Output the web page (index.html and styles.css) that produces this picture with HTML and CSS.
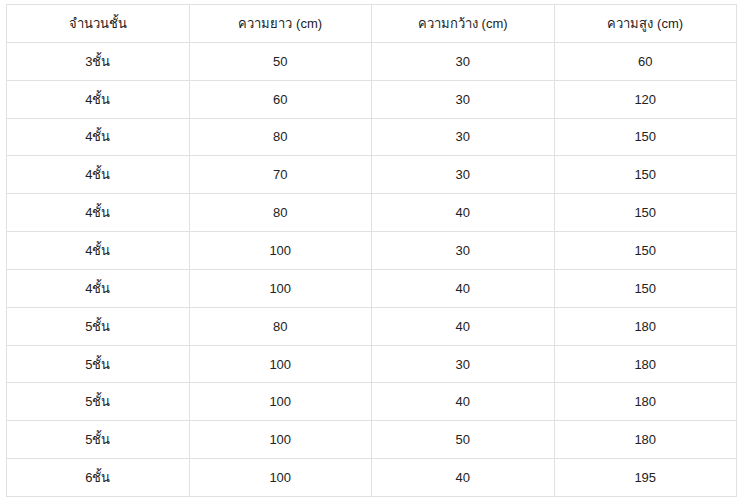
FILE: index.html
```html
<!DOCTYPE html>
<html lang="th">
<head>
<meta charset="utf-8">
<link rel="stylesheet" href="styles.css">
</head>
<body>
<table class="size-table">
  <thead>
    <tr><th>จำนวนชั้น</th><th>ความยาว (cm)</th><th>ความกว้าง (cm)</th><th>ความสูง (cm)</th></tr>
  </thead>
  <tbody>
    <tr><td>3ชั้น</td><td>50</td><td>30</td><td>60</td></tr>
    <tr><td>4ชั้น</td><td>60</td><td>30</td><td>120</td></tr>
    <tr><td>4ชั้น</td><td>80</td><td>30</td><td>150</td></tr>
    <tr><td>4ชั้น</td><td>70</td><td>30</td><td>150</td></tr>
    <tr><td>4ชั้น</td><td>80</td><td>40</td><td>150</td></tr>
    <tr><td>4ชั้น</td><td>100</td><td>30</td><td>150</td></tr>
    <tr><td>4ชั้น</td><td>100</td><td>40</td><td>150</td></tr>
    <tr><td>5ชั้น</td><td>80</td><td>40</td><td>180</td></tr>
    <tr><td>5ชั้น</td><td>100</td><td>30</td><td>180</td></tr>
    <tr><td>5ชั้น</td><td>100</td><td>40</td><td>180</td></tr>
    <tr><td>5ชั้น</td><td>100</td><td>50</td><td>180</td></tr>
    <tr><td>6ชั้น</td><td>100</td><td>40</td><td>195</td></tr>
  </tbody>
</table>
</body>
</html>
```
FILE: styles.css
```css
html, body {
  margin: 0;
  background: #fff;
}
body {
  padding: 4px 6px;
  font-family: "Liberation Sans", Tahoma, sans-serif;
  font-size: 13px;
  color: #222;
}
.size-table {
  width: 731px;
  border-collapse: collapse;
  table-layout: fixed;
}
.size-table th,
.size-table td {
  border: 1px solid #e1e1e1;
  text-align: center;
  vertical-align: middle;
  font-weight: normal;
  height: 37.85px;
  padding: 0 8px;
  box-sizing: border-box;
}
```
